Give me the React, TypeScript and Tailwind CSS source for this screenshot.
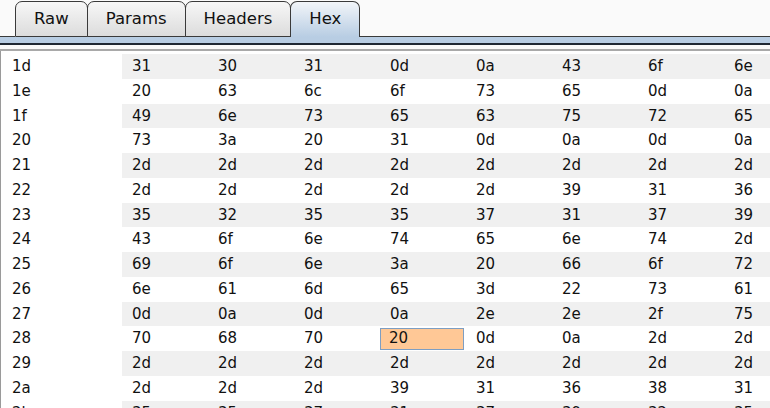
const tabs = ["Raw", "Params", "Headers", "Hex"];

const rows: [string, string][] = [
  ["1d", "31 30 31 0d 0a 43 6f 6e"],
  ["1e", "20 63 6c 6f 73 65 0d 0a"],
  ["1f", "49 6e 73 65 63 75 72 65"],
  ["20", "73 3a 20 31 0d 0a 0d 0a"],
  ["21", "2d 2d 2d 2d 2d 2d 2d 2d"],
  ["22", "2d 2d 2d 2d 2d 39 31 36"],
  ["23", "35 32 35 35 37 31 37 39"],
  ["24", "43 6f 6e 74 65 6e 74 2d"],
  ["25", "69 6f 6e 3a 20 66 6f 72"],
  ["26", "6e 61 6d 65 3d 22 73 61"],
  ["27", "0d 0a 0d 0a 2e 2e 2f 75"],
  ["28", "70 68 70 20 0d 0a 2d 2d"],
  ["29", "2d 2d 2d 2d 2d 2d 2d 2d"],
  ["2a", "2d 2d 2d 39 31 36 38 31"],
  ["2b", "35 35 37 31 37 39 32 35"],
];

export default function App() {
  return (
    <div className="w-[770px] h-[408px] overflow-hidden bg-[#fafafa] text-[#111] font-['DejaVu_Sans',sans-serif]">
      {/* tab strip */}
      <div className="flex h-[37px] items-end">
        <div className="w-[15px] h-px bg-[#3a3a3a]" />
        {tabs.map((t, i) => {
          const active = t === "Hex";
          return (
            <div
              key={t}
              className={
                active
                  ? "relative z-10 -ml-px flex h-[36px] items-center rounded-t-[7px] border border-b-0 border-[#3a3a3a] bg-gradient-to-b from-[#f2f5f9] to-[#b8cde3] px-[18px] text-[16.5px]"
                  : `flex h-[36px] items-center rounded-t-[7px] border border-[#3a3a3a] bg-gradient-to-b from-[#f7f7f7] to-[#dcdcdc] px-[18px] text-[16.5px] ${i > 0 ? "-ml-px" : ""}`
              }
            >
              {t}
            </div>
          );
        })}
        <div className="flex-1 h-px bg-[#3a3a3a]" />
      </div>
      <div className="h-[6px] bg-[#b8cde3]" />
      <div className="h-[2px] bg-[#1f2833]" />
      <div className="h-[4px]" />
      <div className="h-[2px] bg-[#a9a9a9]" />
      {/* hex table */}
      <div className="h-[400px] border-l border-[#9a9a9a] bg-white pt-[3px] text-[15px]">
        {rows.map(([addr, hex], r) => (
          <div key={addr} className="flex h-[24.75px] items-center">
            <div className="w-[121px] shrink-0 pl-[11px]">{addr}</div>
            <div className={`flex h-full flex-1 ${r % 2 === 0 ? "bg-[#f0f0f0]" : "bg-white"}`}>
              {hex.split(" ").map((b, c) => {
                const sel = addr === "28" && c === 3;
                return (
                  <div key={c} className="flex h-full w-[86px] shrink-0 items-center">
                    {sel ? (
                      <div className="flex h-[22px] w-[84px] items-center border border-[#7e9ec2] bg-[#ffc896] pl-[8px]">
                        {b}
                      </div>
                    ) : (
                      <div className="pl-[10px]">{b}</div>
                    )}
                  </div>
                );
              })}
            </div>
          </div>
        ))}
      </div>
    </div>
  );
}
